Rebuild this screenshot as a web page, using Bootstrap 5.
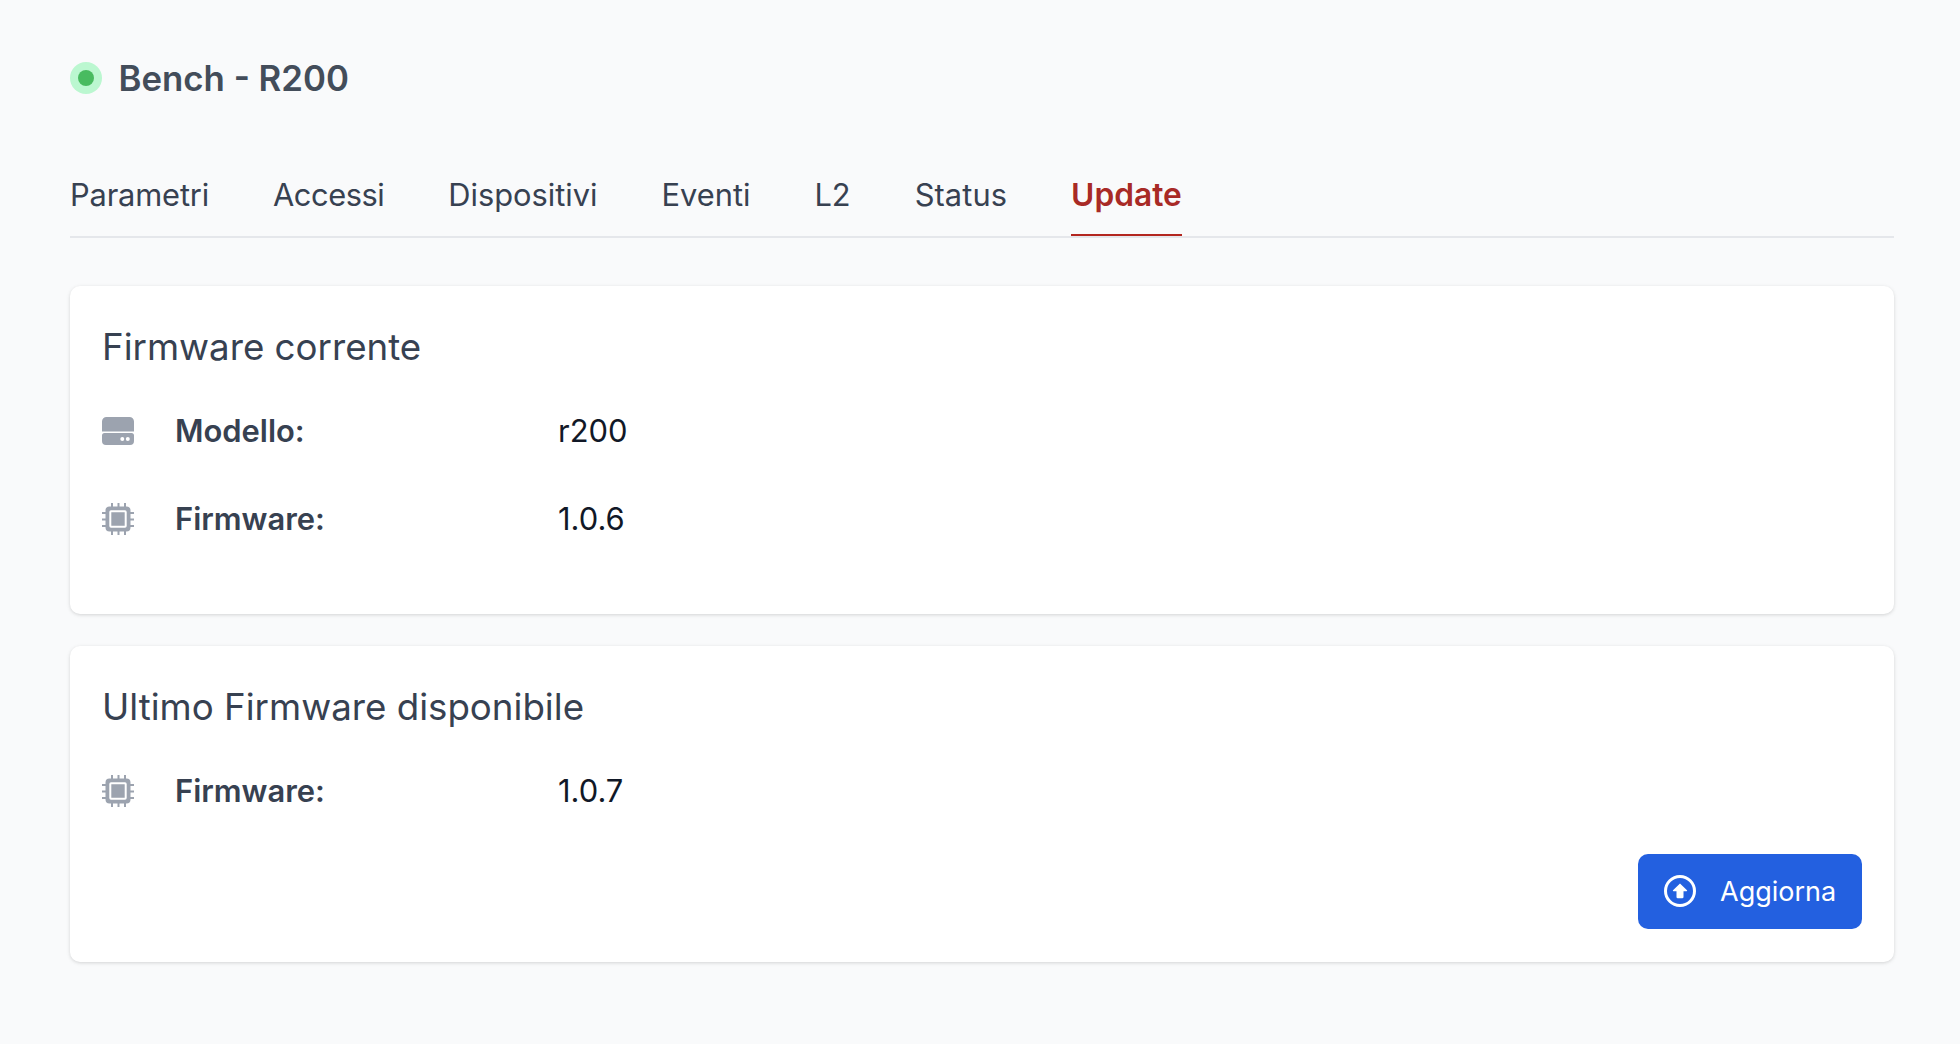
<!DOCTYPE html>
<html lang="it">
<head>
<meta charset="utf-8">
<title>Bench - R200</title>
<link href="https://cdn.jsdelivr.net/npm/bootstrap@5.3.0/dist/css/bootstrap.min.css" rel="stylesheet">
<style>
html,body{height:100%}
body{background:#f9fafb;font-family:Inter,"Noto Sans",sans-serif;color:#374151;overflow:hidden}
.page-wrap{padding:60px 66px 0 70px}
.status-dot{width:32px;height:32px;background:#bbf7d0}
.status-dot span{width:16px;height:16px;background:#48bb60}
.page-title{font-size:34.800px;line-height:36px;font-weight:600;color:#434d5a;margin:0 0 0 16.500px}
.tabs-bar{margin-top:70px;border-bottom:2px solid #e5e7eb;gap:64px;height:72px}
.tabs-bar .nav-link{font-size:30.800px;line-height:36px;height:70px;padding:11px 0 0;color:#374151;border-bottom:2.500px solid transparent}
.tabs-bar .nav-link.active{color:#a82a26;font-size:31.700px;font-weight:600;border-bottom-color:#b3261f}
.tabs-bar .tab-p{letter-spacing:-.15px}
.tabs-bar .tab-a{letter-spacing:-.45px}
.tabs-bar .tab-s{letter-spacing:.1px}
.panel{border:0;border-radius:10px;box-shadow:0 1px 4px rgba(0,0,0,.1),0 1px 3px rgba(0,0,0,.06);margin-bottom:32px}
.panel-first{margin-top:48px;height:328px}
.panel-second{height:316px}
.panel .card-body{padding:41px 32px 0 32px;display:flex;flex-direction:column}
.panel-title{font-size:36.700px;line-height:40px;color:#374151;font-weight:400;margin:0 0 36px}
.info-row{height:56px;margin-bottom:32px;font-size:30.900px;line-height:36px}
.info-ico{width:73px;flex:none;display:flex}
.info-ico svg{width:32px;height:32px;fill:#9ca3af}
.info-label{width:383px;flex:none;font-weight:600;color:#374151}
.info-val{color:#111827}
.update-btn{background:#2360e0;color:#fff;border:0;border-radius:10px;width:224px;height:75px;font-size:27px;padding:0 0 0 26px;gap:24px}
.update-btn svg{width:32px;height:32px;margin-top:-2px}
.update-btn span{margin-top:1px}
.btn-line{margin-top:3px}
</style>
</head>
<body>
<div class="page-wrap">
  <div class="d-flex align-items-center">
    <div class="status-dot rounded-circle d-flex align-items-center justify-content-center"><span class="rounded-circle d-block"></span></div>
    <h1 class="page-title">Bench - R200</h1>
  </div>
  <ul class="nav tabs-bar">
    <li class="nav-item"><a class="nav-link tab-p" href="#">Parametri</a></li>
    <li class="nav-item"><a class="nav-link tab-a" href="#">Accessi</a></li>
    <li class="nav-item"><a class="nav-link" href="#">Dispositivi</a></li>
    <li class="nav-item"><a class="nav-link" href="#">Eventi</a></li>
    <li class="nav-item"><a class="nav-link" href="#">L2</a></li>
    <li class="nav-item"><a class="nav-link tab-s" href="#">Status</a></li>
    <li class="nav-item"><a class="nav-link active" href="#">Update</a></li>
  </ul>
  <div class="card panel panel-first">
    <div class="card-body">
      <h2 class="panel-title">Firmware corrente</h2>
      <div class="info-row d-flex align-items-center">
        <div class="info-ico"><svg viewBox="0 0 32 32"><path fill-rule="evenodd" d="M4.500 2h23A4.500 4.500 0 0 1 32 6.500v10H0v-10A4.500 4.500 0 0 1 4.500 2zM0 20.500A2.500 2.500 0 0 1 2.500 18h27a2.500 2.500 0 0 1 2.500 2.500v5.500a4 4 0 0 1-4 4H4a4 4 0 0 1-4-4zM20.300 22a2 2 0 1 0 0 4 2 2 0 0 0 0-4zm5.500 0a2 2 0 1 0 0 4 2 2 0 0 0 0-4z"/></svg></div>
        <div class="info-label">Modello:</div>
        <div class="info-val">r200</div>
      </div>
      <div class="info-row d-flex align-items-center">
        <div class="info-ico"><svg viewBox="0 0 32 32"><path fill-rule="evenodd" d="M9 0h2v3.500h4.500V0h2v3.500H22V0h2v3.500h.500a4 4 0 0 1 4 4V9H32v2h-3.500v4.500H32v2h-3.500V22H32v2h-3.500v.500a4 4 0 0 1-4 4H24V32h-2v-3.500h-4.500V32h-2v-3.500H11V32H9v-3.500h-1.500a4 4 0 0 1-4-4V24H0v-2h3.500v-4.500H0v-2h3.500V11H0V9h3.500V7.500a4 4 0 0 1 4-4H9zM9 7.300A1.700 1.700 0 0 0 7.300 9v14A1.700 1.700 0 0 0 9 24.700h14a1.700 1.700 0 0 0 1.700-1.700V9A1.700 1.700 0 0 0 23 7.300zm.300 2h13.400v13.400H9.300z"/></svg></div>
        <div class="info-label">Firmware:</div>
        <div class="info-val">1.0.6</div>
      </div>
    </div>
  </div>
  <div class="card panel panel-second">
    <div class="card-body">
      <h2 class="panel-title">Ultimo Firmware disponibile</h2>
      <div class="info-row d-flex align-items-center">
        <div class="info-ico"><svg viewBox="0 0 32 32"><path fill-rule="evenodd" d="M9 0h2v3.500h4.500V0h2v3.500H22V0h2v3.500h.500a4 4 0 0 1 4 4V9H32v2h-3.500v4.500H32v2h-3.500V22H32v2h-3.500v.500a4 4 0 0 1-4 4H24V32h-2v-3.500h-4.500V32h-2v-3.500H11V32H9v-3.500h-1.500a4 4 0 0 1-4-4V24H0v-2h3.500v-4.500H0v-2h3.500V11H0V9h3.500V7.500a4 4 0 0 1 4-4H9zM9 7.300A1.700 1.700 0 0 0 7.300 9v14A1.700 1.700 0 0 0 9 24.700h14a1.700 1.700 0 0 0 1.700-1.700V9A1.700 1.700 0 0 0 23 7.300zm.300 2h13.400v13.400H9.300z"/></svg></div>
        <div class="info-label">Firmware:</div>
        <div class="info-val">1.0.7</div>
      </div>
      <div class="btn-line d-flex justify-content-end">
        <button class="btn update-btn d-flex align-items-center" type="button">
          <svg viewBox="0 0 32 32"><circle cx="16" cy="16" r="14.500" fill="none" stroke="#fff" stroke-width="3"/><path fill="#fff" d="M16 8.500l7 6.700a.6.6 0 0 1-.4 1H19.500v5.800a1.300 1.300 0 0 1-1.300 1.300h-4.400a1.300 1.300 0 0 1-1.300-1.300v-5.800H9.400a.6.6 0 0 1-.4-1z"/></svg>
          <span>Aggiorna</span>
        </button>
      </div>
    </div>
  </div>
</div>
<script src="https://cdn.jsdelivr.net/npm/bootstrap@5.3.0/dist/js/bootstrap.bundle.min.js"></script>
</body>
</html>
